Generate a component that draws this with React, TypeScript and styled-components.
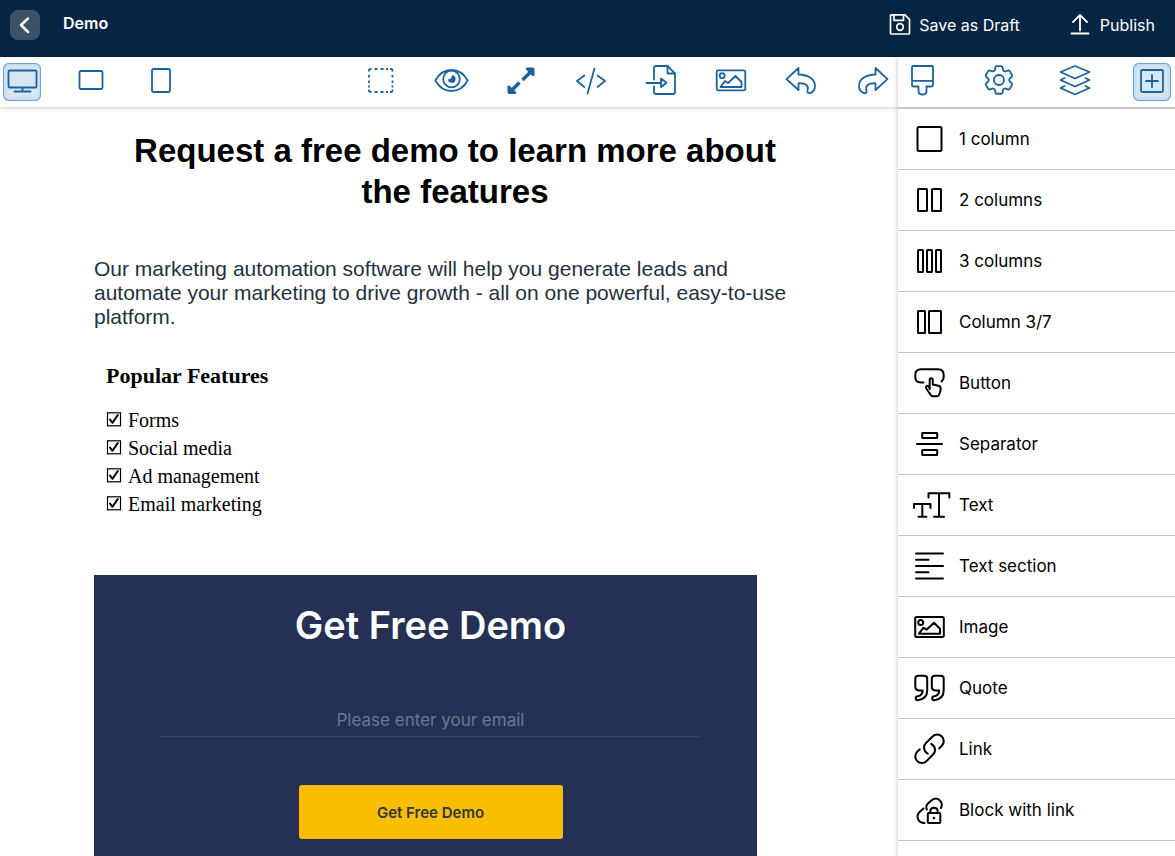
import React from "react";
import styled, { createGlobalStyle } from "styled-components";

const Global = createGlobalStyle`
  *, *::before, *::after { box-sizing: border-box; }
  body { margin: 0; background: #fff; font-family: Inter, "Liberation Sans", sans-serif; color: #000; }
  button { font: inherit; color: inherit; border: 0; background: none; padding: 0; cursor: pointer; }
`;

const Page = styled.div`
  display: flex;
  flex-direction: column;
  height: 100vh;
  overflow: hidden;
`;

const Header = styled.header`
  display: flex;
  align-items: flex-start;
  height: 57px;
  flex: none;
  padding: 10px 20px 0 10px;
  background: #052542;
  color: #fff;
`;

const BackButton = styled.button`
  display: grid;
  place-items: center;
  width: 30px;
  height: 30px;
  border-radius: 8px;
  background: #3b5269;
`;

const Title = styled.h1`
  margin: 0 auto 0 23px;
  font: 600 16px/26px Inter, sans-serif;
`;

const HeaderAction = styled.button`
  display: flex;
  align-items: center;
  gap: 8px;
  height: 30px;
  margin-left: 48px;
  font-size: 16px;
`;

const Workspace = styled.div`
  display: flex;
  flex: 1;
  min-height: 0;
`;

const Editor = styled.main`
  display: flex;
  flex-direction: column;
  flex: 1;
  min-width: 0;
`;

const Toolbar = styled.div`
  display: flex;
  justify-content: space-between;
  align-items: center;
  height: 50px;
  flex: none;
  padding: 0 8px 0 3px;
  box-shadow: 0 1px 4px rgba(0, 0, 0, 0.2);
`;

const ToolGroup = styled.div`
  display: flex;
  gap: 32px;
`;

const ToolButton = styled.button<{ $active?: boolean }>`
  display: grid;
  place-items: center;
  width: 38px;
  height: 38px;
  flex: none;
  border-radius: 6px;
  color: #1c639d;
  background: ${(p) => (p.$active ? "#d6e6f3" : "transparent")};
  box-shadow: ${(p) => (p.$active ? "inset 0 0 0 1px #68a5d5, inset 0 0 5px #a9c6dc" : "none")};
`;

const Canvas = styled.div`
  flex: 1;
  min-height: 0;
  overflow: hidden;
  padding: 23px 82px 0 94px;
`;

const Heading = styled.h2`
  margin: 0 0 45px;
  padding: 0 24px;
  font: 700 33px/41px "Liberation Sans", Arial, sans-serif;
  text-align: center;
`;

const Lead = styled.p`
  margin: 0 0 33px;
  font: 400 21px/24px "Liberation Sans", Arial, sans-serif;
  color: #23323f;
`;

const Features = styled.section`
  padding-left: 12px;
  margin-bottom: 57px;
  font-family: "Liberation Serif", "Times New Roman", serif;
`;

const FeaturesTitle = styled.h3`
  margin: 0 0 16px;
  font-size: 22px;
  line-height: 28px;
`;

const FeatureList = styled.ul`
  margin: 0;
  padding: 0;
  list-style: none;
  font-size: 20px;
  line-height: 28px;
`;

const Feature = styled.li`
  display: flex;
  align-items: center;
  gap: 6px;
`;

const DemoForm = styled.form`
  display: flex;
  flex-direction: column;
  align-items: center;
  max-width: 663px;
  height: 340px;
  padding: 25px 56px 0 66px;
  background: #243154;
  color: #fff;
`;

const FormTitle = styled.h3`
  margin: 0 0 47px;
  font-size: 38px;
  line-height: 50px;
  font-weight: 600;
`;

const EmailInput = styled.input`
  width: 100%;
  height: 40px;
  margin-bottom: 48px;
  padding: 6px 0 0;
  border: 0;
  border-bottom: 1px solid #37445f;
  outline: 0;
  background: none;
  color: #fff;
  font: 400 17px Inter, sans-serif;
  text-align: center;
  &::placeholder { color: #6d7690; opacity: 1; }
`;

const SubmitButton = styled.button`
  width: 264px;
  height: 54px;
  border-radius: 3px;
  background: #f9be00;
  color: #2f3846;
  font-size: 15px;
  font-weight: 600;
`;

const Sidebar = styled.aside`
  position: relative;
  width: 277px;
  flex: none;
  background: #fff;
  box-shadow: 0 0 5px rgba(0, 0, 0, 0.25);
  clip-path: inset(0 0 0 -8px);
`;

const SidebarTabs = styled.div`
  display: flex;
  align-items: center;
  justify-content: space-between;
  height: 52px;
  padding: 0 4px 0 6px;
  border-bottom: 2px solid #c9c9c9;
`;

const BlockButton = styled.button`
  display: flex;
  align-items: center;
  gap: 8px;
  width: 100%;
  height: 61px;
  padding-left: 13px;
  border-bottom: 1px solid #c4c4c4;
  font-size: 17px;
  text-align: left;
`;

type DrawingProps = { size: number; stroke?: number; children: React.ReactNode };

const Drawing = ({ size, stroke = 2, children }: DrawingProps) => (
  <svg
    width={size}
    height={size}
    viewBox={`0 0 ${size} ${size}`}
    fill="none"
    stroke="currentColor"
    strokeWidth={stroke}
    strokeLinecap="round"
    strokeLinejoin="round"
    aria-hidden="true"
  >
    {children}
  </svg>
);

const gearPath =
  "M9.594 3.94c.09-.542.56-.94 1.11-.94h2.593c.55 0 1.02.398 1.11.94l.213 1.281c.063.374.313.686.645.87.074.04.147.083.22.127.325.196.72.257 1.075.124l1.217-.456a1.125 1.125 0 0 1 1.37.49l1.296 2.247a1.125 1.125 0 0 1-.26 1.431l-1.003.827c-.293.241-.438.613-.43.992a7.723 7.723 0 0 1 0 .255c-.008.378.137.75.43.991l1.004.827c.424.35.534.955.26 1.43l-1.298 2.247a1.125 1.125 0 0 1-1.369.491l-1.217-.456c-.355-.133-.75-.072-1.076.124a6.47 6.47 0 0 1-.22.128c-.331.183-.581.495-.644.869l-.213 1.281c-.09.543-.56.94-1.11.94h-2.594c-.55 0-1.019-.398-1.11-.94l-.213-1.281c-.062-.374-.312-.686-.644-.87a6.52 6.52 0 0 1-.22-.127c-.325-.196-.72-.257-1.076-.124l-1.217.456a1.125 1.125 0 0 1-1.369-.49l-1.297-2.247a1.125 1.125 0 0 1 .26-1.431l1.004-.827c.292-.24.437-.613.43-.991a6.932 6.932 0 0 1 0-.255c.007-.38-.138-.751-.43-.992l-1.004-.827a1.125 1.125 0 0 1-.26-1.43l1.297-2.247a1.125 1.125 0 0 1 1.37-.491l1.216.456c.356.133.751.072 1.076-.124.072-.044.146-.086.22-.128.332-.183.582-.495.644-.869l.214-1.28Z";

const linkPath =
  "M13.19 8.688a4.5 4.5 0 0 1 1.242 7.244l-4.5 4.5a4.5 4.5 0 0 1-6.364-6.364l1.757-1.757m13.35-.622 1.757-1.757a4.5 4.5 0 0 0-6.364-6.364l-4.5 4.5a4.5 4.5 0 0 0 1.242 7.244";

const undoPath =
  "M4.500 16.200 16.500 5v6.500c10 .3 16.500 4.500 16.500 11.500 0 3.500-2 5.800-4.500 7-1.800.8-3.800-.6-3-2.500 1.500-4.200-1-7.300-9-7.300v6.800z";

const picture = (
  <>
    <rect x="4.700" y="7.300" width="28.600" height="20" rx="1.500" />
    <circle cx="10.200" cy="12.700" r="2.500" />
    <path d="M8.500 24 13 18l3 2 7.500-7 6 6v5z" />
  </>
);

const viewTools = [
  {
    name: "Desktop view",
    art: (
      <>
        <rect x="5.500" y="7.500" width="28" height="17" rx="1" />
        <path d="M19.500 24.500v4M11.500 28.500h16" />
      </>
    ),
  },
  { name: "Landscape view", art: <rect x="6.500" y="8" width="23" height="18" rx="1.500" /> },
  { name: "Portrait view", art: <rect x="9" y="6" width="18" height="23" rx="1.500" /> },
];

const editTools = [
  {
    name: "Show borders",
    art: (
      <path
        d="M7 8.500V7.500Q7 6 8.500 6h1M28 6h1q1.500 0 1.500 1.500v1M30.500 26.500v1q0 1.500-1.500 1.500h-1M9.500 29h-1Q7 29 7 27.500v-1M12.500 6h3M18.500 6h3M24 6h2M12.500 29h3M18.500 29h3M24 29h2M7 12v2.500M7 17.500v2.500M7 22.500v2M30.500 12v2.500M30.500 17.500v2.500M30.500 22.500v2"
        strokeLinecap="butt"
      />
    ),
  },
  {
    name: "Preview",
    art: (
      <>
        <path d="M3.300 17.500C7 10.800 12.500 7 19.500 7s12.500 3.800 16.200 10.500C32 24.200 26.500 28 19.500 28S7 24.200 3.300 17.500z" />
        <circle cx="19.500" cy="16" r="8.300" />
        <path d="M20 12.200a3.800 3.800 0 1 1-4 3.800c1.500.8 4-.3 4-3.800z" fill="currentColor" stroke="none" />
      </>
    ),
  },
  {
    name: "Full screen",
    art: (
      <>
        <path d="M20.500 17 28 9.500M17.500 19.500 10 27" strokeWidth="3.500" strokeLinecap="butt" />
        <path
          d="M25 4.500h5.500q2 0 2 2V12q0 1.500-2 1l-6.500-6.500q-.8-1.700 1-2zM13 31H7.500q-2 0-2-2v-5.500q0-1.500 2-1l6.500 6.500q.8 1.700-1 2z"
          fill="currentColor"
          stroke="none"
        />
      </>
    ),
  },
  { name: "View code", art: <path d="M12.300 12.500 5 18l7.300 6M25.500 12.500 33 18l-7.500 6M22.500 5.500l-7 25" /> },
  {
    name: "Import",
    art: (
      <>
        <path d="M12 16.500V5q0-2 2-2h11.500l7.500 7.500V29q0 2-2 2H14q-2 0-2-2v-5.500" />
        <path d="M25.500 3v7.500H33M4.500 20H19M19 15.500v8.500l5.500-4.200z" />
      </>
    ),
  },
  { name: "Images", art: picture },
  { name: "Undo", art: <path d={undoPath} /> },
  { name: "Redo", art: <path d={undoPath} transform="translate(40 0) scale(-1 1)" /> },
];

const panels = [
  {
    name: "Styles",
    art: (
      <path d="M9 3h19q1 0 1 1v18q0 1.500-1.500 1.500H22.500v5q0 3-4 3t-4-3v-5H9.500Q8 23.500 8 22V4q0-1 1-1zM8 17.800h21" />
    ),
  },
  {
    name: "Settings",
    art: (
      <>
        <path d={gearPath} transform="translate(.6 -1.400) scale(1.530)" strokeWidth="1.200" />
        <circle cx="19" cy="17" r="5" />
      </>
    ),
  },
  {
    name: "Layers",
    art: <path d="M18 3 32.500 9 18 15.500 3.500 9zM7.500 15 3.500 17 18 23.500 32.500 17l-4-2M7.500 23l-4 2L18 31.500 32.500 25l-4-2" />,
  },
  {
    name: "Blocks",
    art: (
      <>
        <rect x="8" y="7" width="22" height="22" rx="1.500" />
        <path d="M19 12v12M13 18h12" />
      </>
    ),
  },
];

const blocks = [
  { name: "1 column", art: <rect x="6.500" y="8" width="24" height="24" rx="1.500" /> },
  {
    name: "2 columns",
    art: (
      <>
        <rect x="7" y="9" width="9" height="22" rx=".5" />
        <rect x="21" y="9" width="9" height="22" rx=".5" />
      </>
    ),
  },
  {
    name: "3 columns",
    art: (
      <>
        <rect x="7" y="9" width="5" height="22" rx=".5" />
        <rect x="16" y="9" width="5" height="22" rx=".5" />
        <rect x="25" y="9" width="5" height="22" rx=".5" />
      </>
    ),
  },
  {
    name: "Column 3/7",
    art: (
      <>
        <rect x="7" y="9" width="7" height="22" rx=".5" />
        <rect x="18" y="9" width="12" height="22" rx=".5" />
      </>
    ),
  },
  {
    name: "Button",
    art: (
      <>
        <path d="M12.500 19.500H10q-5.700 0-5.700-5.500v-2q0-5.700 5.700-5.700h17q5.700 0 5.700 5.700v2q0 3-2.200 4.500" />
        <path d="M18.700 26V17q0-1.700 1.500-1.700t1.600 1.700v4.500l5.700 1.300q2.300.6 2.200 3-.1 3-1.700 6-.6 1.500-2 1.500h-4q-1.500 0-2.500-1.500l-4-6q-1-1.800.2-2.700 1.100-.7 2.200.4z" />
      </>
    ),
  },
  {
    name: "Separator",
    art: (
      <>
        <rect x="11.200" y="9" width="15" height="5" rx=".5" />
        <path d="M6 20h25" />
        <rect x="11.200" y="26" width="15" height="5" rx=".5" />
      </>
    ),
  },
  {
    name: "Text",
    art: <path d="M17.500 12.500V8.300h20.800v4.200M28 8.300v23.500M23 31.800h10M3 23v-4h16.500v4M11.300 19v12.800M7.500 31.800h8" />,
  },
  { name: "Text section", art: <path d="M5 7.500h27M5 13.800h12.500M5 20h27M5 26.300h12.500M5 32.500h27" /> },
  { name: "Image", art: <g transform="translate(-.5 2.700)">{picture}</g> },
  {
    name: "Quote",
    art: (
      <>
        <path id="mark" d="M16.200 10.500v12q0 8.500-9.500 9.700-2 0-2-2t2-2q5-.7 5-5.700H8.500q-4.200 0-4.200-4.200v-7.500q0-3 3-3h6q2.900 0 2.900 2.700z" />
        <use href="#mark" x="16.500" />
      </>
    ),
  },
  {
    name: "Link",
    art: <path d={linkPath} transform="translate(1 2.300) scale(1.460)" strokeWidth="1.400" />,
  },
  {
    name: "Block with link",
    art: (
      <>
        <path d="M15.800 19.500q-1.500-3.500 1.200-6l3-2.700c6-5.500 13 1 10 7.200" />
        <path d="M12.500 18.500l-3.500 3c-5 5-1.800 11.300 4.500 11.500" />
        <rect x="16.800" y="23" width="12.500" height="10" rx="1" />
        <path d="M19.300 23v-1.500q0-3.700 3.700-3.700t3.700 3.700V23" />
        <circle cx="23" cy="28" r="1.300" fill="currentColor" stroke="none" />
      </>
    ),
  },
];

const features = ["Forms", "Social media", "Ad management", "Email marketing"];

export default function App() {
  return (
    <Page>
      <Global />
      <Header>
        <BackButton aria-label="Back">
          <Drawing size={30} stroke={2.5}>
            <path d="M18 8.500 11 15l7 7" />
          </Drawing>
        </BackButton>
        <Title>Demo</Title>
        <HeaderAction>
          <Drawing size={24} stroke={1.7}>
            <path d="M4.500 1.800H18L22.500 6.500V20q0 1-1 1h-17q-1 0-1-1V2.800q0-1 1-1z" />
            <path d="M7 1.800v5.500h9.500V1.800" />
            <circle cx="13" cy="14" r="3.300" />
          </Drawing>
          Save as Draft
        </HeaderAction>
        <HeaderAction>
          <Drawing size={24} stroke={1.8}>
            <path d="M12 17.500V2.500M5 9 12 2l7 7M3.500 20.500h17" />
          </Drawing>
          Publish
        </HeaderAction>
      </Header>
      <Workspace>
        <Editor>
          <Toolbar>
            <ToolGroup>
              {viewTools.map((t, i) => (
                <ToolButton key={t.name} aria-label={t.name} $active={i === 0}>
                  <Drawing size={38} stroke={1.8}>{t.art}</Drawing>
                </ToolButton>
              ))}
            </ToolGroup>
            <ToolGroup>
              {editTools.map((t) => (
                <ToolButton key={t.name} aria-label={t.name}>
                  <Drawing size={38} stroke={1.8}>{t.art}</Drawing>
                </ToolButton>
              ))}
            </ToolGroup>
          </Toolbar>
          <Canvas>
            <Heading>Request a free demo to learn more about the features</Heading>
            <Lead>
              Our marketing automation software will help you generate leads and automate your marketing to drive
              growth - all on one powerful, easy-to-use platform.
            </Lead>
            <Features>
              <FeaturesTitle>Popular Features</FeaturesTitle>
              <FeatureList>
                {features.map((f) => (
                  <Feature key={f}>
                    <Drawing size={16} stroke={1.2}>
                      <rect x="1.500" y=".8" width="13" height="13" strokeLinejoin="miter" />
                      <path d="M4 7.500 6.500 10.800 11.800 3" strokeWidth="2" />
                    </Drawing>
                    {f}
                  </Feature>
                ))}
              </FeatureList>
            </Features>
            <DemoForm onSubmit={(e) => e.preventDefault()}>
              <FormTitle>Get Free Demo</FormTitle>
              <EmailInput type="email" aria-label="Email" placeholder="Please enter your email" />
              <SubmitButton type="submit">Get Free Demo</SubmitButton>
            </DemoForm>
          </Canvas>
        </Editor>
        <Sidebar>
          <SidebarTabs>
            {panels.map((t) => (
              <ToolButton key={t.name} aria-label={t.name} $active={t.name === "Blocks"}>
                <Drawing size={38} stroke={1.8}>{t.art}</Drawing>
              </ToolButton>
            ))}
          </SidebarTabs>
          {blocks.map((b) => (
            <BlockButton key={b.name}>
              <Drawing size={40}>{b.art}</Drawing>
              {b.name}
            </BlockButton>
          ))}
        </Sidebar>
      </Workspace>
    </Page>
  );
}
